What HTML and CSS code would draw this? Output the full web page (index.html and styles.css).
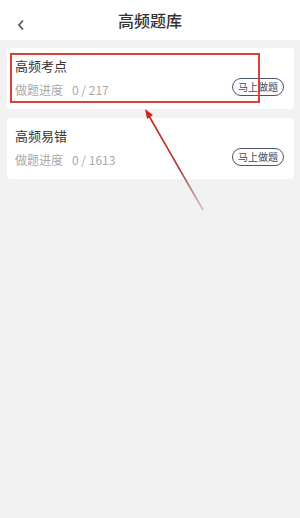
FILE: index.html
```html
<!DOCTYPE html>
<html lang="zh-CN">
<head>
    <meta charset="UTF-8">
    <meta name="viewport" content="width=device-width, initial-scale=1.0">
    <title>高频题库</title>
    <link rel="stylesheet" href="styles.css">
</head>
<body>
    <div class="header">
        <span class="back">
            <svg width="10" height="14" viewBox="0 0 10 14"><path d="M7 2.5 L3 7 L7 11.5" fill="none" stroke="#555" stroke-width="1.7"/></svg>
        </span>
        <h1>高频题库</h1>
    </div>

    <div class="list">
        <div class="card">
            <div class="info">
                <h3>高频考点</h3>
                <p><span>做题进度</span>0 / 217</p>
            </div>
            <button>马上做题</button>
        </div>
        <div class="card">
            <div class="info">
                <h3>高频易错</h3>
                <p><span>做题进度</span>0 / 1613</p>
            </div>
            <button>马上做题</button>
        </div>
    </div>

    <!-- 标注 -->
    <div class="mark"></div>
    <svg class="arrow" width="300" height="518" viewBox="0 0 300 518">
        <defs>
            <linearGradient id="g" x1="146" y1="110" x2="203" y2="210" gradientUnits="userSpaceOnUse">
                <stop offset="0" stop-color="#d8221c"/>
                <stop offset="0.6" stop-color="#b04040"/>
                <stop offset="1" stop-color="#c8c8c8"/>
            </linearGradient>
        </defs>
        <line x1="149" y1="116" x2="203" y2="210" stroke="url(#g)" stroke-width="1.6"/>
        <path d="M145 109 L153 115 L147 119 Z" fill="#d8221c"/>
    </svg>
</body>
</html>
```

FILE: styles.css
```css
body {
    margin: 0;
    background: #f2f2f2;
    font-family: "Noto Sans CJK SC", "Noto Sans", sans-serif;
    color: #333;
    height: 518px;
    position: relative;
    overflow: hidden;
}
.header {
    height: 40px;
    background: #fff;
    display: flex;
    align-items: center;
    justify-content: center;
    position: relative;
}
.header h1 {
    margin: 0;
    font-size: 16px;
    font-weight: 500;
    color: #333;
}
.back {
    position: absolute;
    left: 16px;
    top: 13px;
}
.list {
    padding: 8px 6px 0 7px;
    display: flex;
    flex-direction: column;
    gap: 9px;
}
.card {
    background: #fff;
    border-radius: 4px;
    height: 61px;
    display: flex;
    align-items: flex-start;
    justify-content: space-between;
    padding: 0 10px 0 8px;
}
.info h3 {
    margin: 9px 0 0;
    font-size: 13px;
    font-weight: 400;
    line-height: 18px;
    color: #333;
}
.info p {
    margin: 7px 0 0;
    font-size: 12px;
    line-height: 16px;
    color: #aaa;
}
.info p span {
    margin-right: 9px;
}
button {
    margin-top: 30px;
    height: 18px;
    padding: 0 5px;
    font-family: inherit;
    font-size: 10px;
    line-height: 14px;
    color: #3a4a66;
    background: #fff;
    border: 1px solid #4a5670;
    border-radius: 9px;
}
.mark {
    position: absolute;
    left: 10px;
    top: 53px;
    width: 246px;
    height: 46px;
    border: 2px solid #d9403a;
}
.arrow {
    position: absolute;
    left: 0;
    top: 0;
}
```
